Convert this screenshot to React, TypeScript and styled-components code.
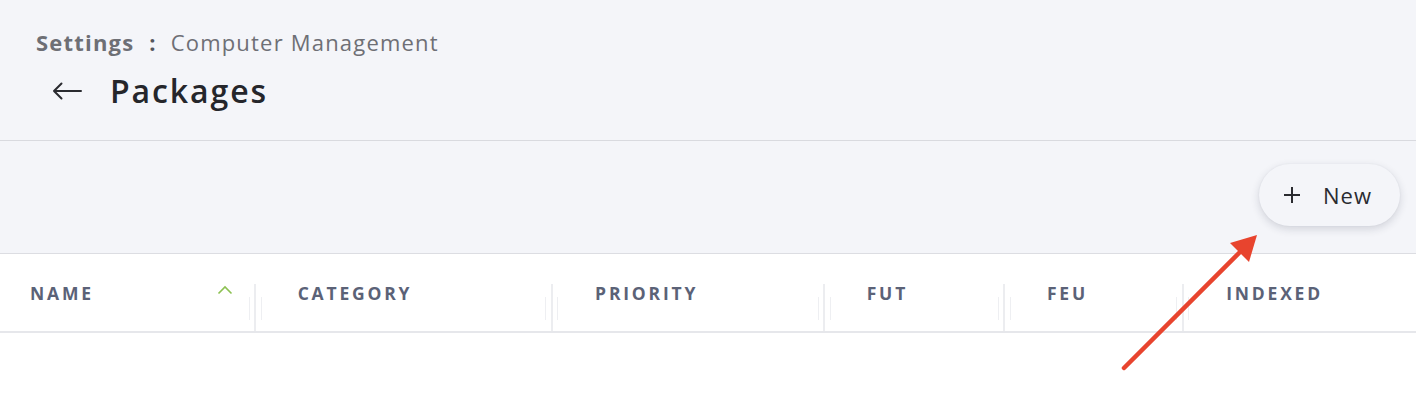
import React from "react";
import styled, { createGlobalStyle } from "styled-components";

const GlobalStyle = createGlobalStyle`
  html, body {
    margin: 0;
    padding: 0;
    background: #ffffff;
    font-family: "Open Sans", "Liberation Sans", sans-serif;
  }
`;

const Page = styled.div`
  position: relative;
  width: 1416px;
  height: 406px;
  overflow: hidden;
  background: #ffffff;
`;

const TitleBar = styled.header`
  display: flex;
  flex-direction: column;
  height: 141px;
  box-sizing: border-box;
  padding: 27px 0 0 36px;
  background: #f4f5f9;
  border-bottom: 1px solid #d9dadf;
`;

const Breadcrumb = styled.div`
  display: flex;
  align-items: center;
  gap: 15px;
  font-size: 22px;
  line-height: 30px;
  color: #6e6f75;
`;

const Crumb = styled.span<{ strong?: boolean }>`
  font-weight: ${({ strong }) => (strong ? 700 : 400)};
  letter-spacing: 1.2px;
`;

const Sep = styled.span`
  font-weight: 700;
  color: #55565c;
`;

const TitleRow = styled.div`
  display: flex;
  align-items: center;
  gap: 28px;
  margin-top: 14px;
  padding-left: 16px;
`;

const BackButton = styled.button`
  display: flex;
  align-items: center;
  padding: 0;
  border: none;
  background: none;
  color: #2a2b30;
  cursor: pointer;
`;

const Title = styled.h1`
  margin: 0;
  font-size: 32px;
  line-height: 40px;
  font-weight: 600;
  letter-spacing: 1.9px;
  color: #25262b;
`;

const Toolbar = styled.div`
  display: flex;
  align-items: center;
  justify-content: flex-end;
  height: 112px;
  padding-right: 16px;
  background: #f4f5f9;
  border-bottom: 1px solid #dcdde2;
`;

const NewButton = styled.button`
  display: flex;
  align-items: center;
  gap: 22px;
  height: 62px;
  margin-top: -4px;
  padding: 0 28px 0 24px;
  border: none;
  border-radius: 31px;
  background: #f4f5f9;
  box-shadow: 0 3px 8px rgba(30, 35, 60, 0.16), 0 0 2px rgba(30, 35, 60, 0.06);
  font-family: inherit;
  font-size: 22px;
  letter-spacing: 1px;
  color: #2a2b30;
  cursor: pointer;
`;

const HeaderRow = styled.div`
  display: flex;
  height: 77px;
  border-bottom: 2px solid #e6e7eb;
`;

const HeadCell = styled.div<{ width: number; pad: number }>`
  display: flex;
  align-items: center;
  justify-content: space-between;
  box-sizing: border-box;
  width: ${({ width }) => width}px;
  padding: 0 14px 0 ${({ pad }) => pad}px;
  font-size: 17.5px;
  font-weight: 700;
  letter-spacing: 2.8px;
  color: #5b6277;
`;

const Divider = styled.div`
  display: flex;
  align-items: flex-end;
  justify-content: space-between;
  width: 13px;
  flex: none;
`;

const MainLine = styled.span`
  width: 2px;
  height: 47px;
  background: #ecedf0;
`;

const FaintLine = styled.span`
  width: 1px;
  height: 23px;
  margin-bottom: 11px;
  background: #eeeff2;
`;

const SortIcon = styled.svg`
  flex: none;
  margin-top: -6px;
  margin-right: 2px;
`;

const Callout = styled.svg`
  position: absolute;
  left: 0;
  top: 0;
  pointer-events: none;
`;

const columns = [
  { label: "NAME", width: 250, pad: 30, sort: true },
  { label: "CATEGORY", width: 285, pad: 36 },
  { label: "PRIORITY", width: 261, pad: 37 },
  { label: "FUT", width: 168, pad: 36 },
  { label: "FEU", width: 166, pad: 36 },
  { label: "INDEXED", width: 228, pad: 37 },
];

const Sep3 = () => (
  <Divider>
    <FaintLine />
    <MainLine />
    <FaintLine />
  </Divider>
);

export default function App() {
  return (
    <Page>
      <GlobalStyle />
      <TitleBar>
        <Breadcrumb>
          <Crumb strong>Settings</Crumb>
          <Sep>:</Sep>
          <Crumb>Computer Management</Crumb>
        </Breadcrumb>
        <TitleRow>
          <BackButton aria-label="Back">
            <svg width="30" height="18" viewBox="0 0 30 18" fill="none">
              <path
                d="M29 9H2M9.5 1.5L2 9l7.5 7.5"
                stroke="currentColor"
                strokeWidth="2"
                strokeLinecap="round"
                strokeLinejoin="round"
              />
            </svg>
          </BackButton>
          <Title>Packages</Title>
        </TitleRow>
      </TitleBar>

      <Toolbar>
        <NewButton>
          <svg width="18" height="18" viewBox="0 0 18 18" fill="none">
            <path d="M9 1v16M1 9h16" stroke="currentColor" strokeWidth="2" />
          </svg>
          New
        </NewButton>
      </Toolbar>

      <HeaderRow>
        {columns.map((c, i) => (
          <React.Fragment key={c.label}>
            {i > 0 && <Sep3 />}
            <HeadCell width={c.width} pad={c.pad}>
              <span>{c.label}</span>
              {c.sort && (
                <SortIcon width="16" height="10" viewBox="0 0 16 10" fill="none">
                  <path
                    d="M1.5 8.5L8 2l6.5 6.5"
                    stroke="#8cc152"
                    strokeWidth="1.6"
                  />
                </SortIcon>
              )}
            </HeadCell>
          </React.Fragment>
        ))}
      </HeaderRow>

      <Callout width="1416" height="406" viewBox="0 0 1416 406">
        <line
          x1="1124"
          y1="368"
          x2="1240"
          y2="252"
          stroke="#e8442e"
          strokeWidth="4.5"
          strokeLinecap="round"
        />
        <path d="M1257 235L1249 262L1230 243Z" fill="#e8442e" />
      </Callout>
    </Page>
  );
}
